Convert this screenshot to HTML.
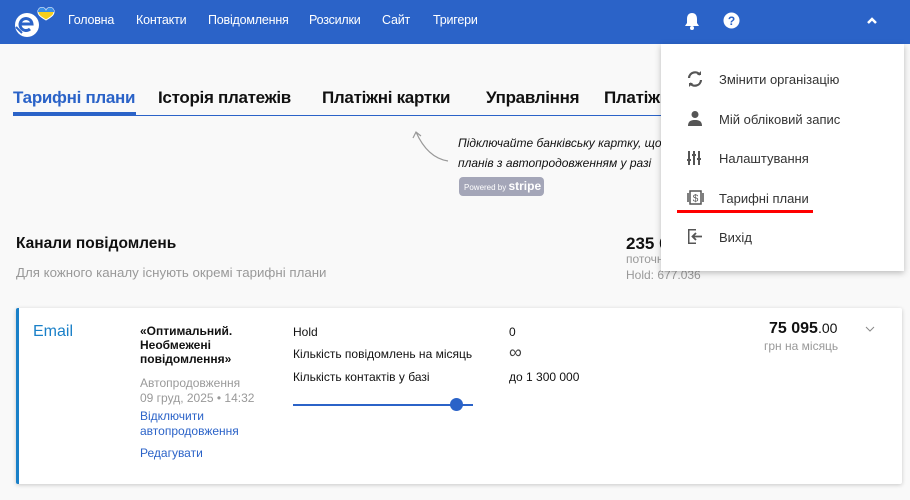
<!DOCTYPE html>
<html><head><meta charset="utf-8"><style>
*{margin:0;padding:0;box-sizing:border-box}
body{width:910px;height:500px;overflow:hidden;background:#f9f9f9;font-family:"Liberation Sans",sans-serif;position:relative;color:#111}
.hdr{position:absolute;left:0;top:0;width:910px;height:44px;background:#2b63c8}
.nav{position:absolute;top:13px;color:#fff;font-size:12.5px;letter-spacing:-0.2px}
.a{position:absolute;white-space:nowrap}
.tab{position:absolute;top:88px;font-size:17px;letter-spacing:-0.3px;font-weight:bold;color:#111;white-space:nowrap}
.menu{position:absolute;left:661px;top:44px;width:243px;height:227px;background:#fff;box-shadow:0 2px 6px rgba(0,0,0,.25)}
.mi{position:absolute;left:58px;font-size:13px;color:#333}
.ic{position:absolute;left:26px}
.card{position:absolute;left:16px;top:308px;width:886px;height:176px;background:#fff;border-left:3px solid #1a80c8;box-shadow:0 1px 4px rgba(0,0,0,.2);border-radius:2px}
.s{font-size:12px}
</style></head><body>
<div class="hdr"></div>
<svg class="a" style="left:12px;top:5px" width="44" height="34" viewBox="0 0 44 34">
<circle cx="15" cy="20" r="12" fill="#fff"/>
<path d="M9 19h11a6 6 0 1 0-2 5" stroke="#2b63c8" stroke-width="3" fill="none"/>
<path d="M4 22l6 6" stroke="#2b63c8" stroke-width="2"/>
<path d="M34 15c-5-3-8-5-8-8a3 3 0 0 1 8-1a3 3 0 0 1 8 1c0 3-3 5-8 8z" fill="#f6cf1d" stroke="#fff" stroke-width="1"/>
<path d="M26 7a3 3 0 0 1 8-1a3 3 0 0 1 8 1z" fill="#3a8ee6"/>
</svg>
<div class="nav" style="left:68px">Головна</div>
<div class="nav" style="left:136px">Контакти</div>
<div class="nav" style="left:208px">Повідомлення</div>
<div class="nav" style="left:309px">Розсилки</div>
<div class="nav" style="left:382px">Сайт</div>
<div class="nav" style="left:433px">Тригери</div>
<svg class="a" style="left:684px;top:12px" width="16" height="18" viewBox="0 0 16 18"><path d="M8 1c3 0 5 2 5 6v4l2 3H1l2-3V7c0-4 2-6 5-6z" fill="#fff"/><circle cx="8" cy="16" r="2" fill="#fff"/></svg>
<svg class="a" style="left:723px;top:12px" width="17" height="17" viewBox="0 0 17 17"><circle cx="8.5" cy="8.5" r="8" fill="#fff"/><text x="8.5" y="13" text-anchor="middle" font-size="12" font-weight="bold" fill="#2b63c8" font-family="Liberation Sans">?</text></svg>
<svg class="a" style="left:866px;top:16px" width="12" height="9" viewBox="0 0 12 9"><path d="M2 7l4-4 4 4" stroke="#fff" stroke-width="2.5" fill="none"/></svg>

<div class="tab" style="left:13px;color:#2b63c8">Тарифні плани</div>
<div class="tab" style="left:158px">Історія платежів</div>
<div class="tab" style="left:322px">Платіжні картки</div>
<div class="tab" style="left:486px">Управління</div>
<div class="tab" style="left:604px">Платіжні</div>
<div class="a" style="left:13px;top:115px;width:650px;height:1px;background:#2b63c8"></div>
<div class="a" style="left:13px;top:112px;width:123px;height:3px;background:#2b63c8"></div>

<svg class="a" style="left:410px;top:128px" width="40" height="36" viewBox="0 0 40 36"><path d="M38 33C25 31 14 22 6 4M3 10l3-6 5 4" stroke="#999" stroke-width="1.2" fill="none"/></svg>
<div class="a" style="left:458px;top:133px;font-size:12px;font-style:italic;line-height:20px">Підключайте банківську картку, щоб<br>планів з автопродовженням у разі</div>
<div class="a" style="left:459px;top:177px;width:85px;height:19px;background:#a4a6b8;border-radius:4px;color:#fff;font-size:8px;line-height:19px;padding-left:5px">Powered by <b style="font-size:12px">stripe</b></div>

<div class="a" style="left:16px;top:235px;font-size:15.5px;font-weight:bold">Канали повідомлень</div>
<div class="a" style="left:16px;top:265px;font-size:13.3px;color:#999">Для кожного каналу існують окремі тарифні плани</div>
<div class="a" style="left:626px;top:234px;font-size:17px;font-weight:bold">235 0</div>
<div class="a" style="left:626px;top:252px;font-size:12px;color:#999">поточн</div>
<div class="a" style="left:626px;top:268px;font-size:12px;color:#999">Hold: 677.036</div>

<div class="card">
<div class="a" style="left:14px;top:15px;font-size:16px;color:#1a80c8">Email</div>
<div class="a" style="left:121px;top:16px;font-size:12px;font-weight:bold;line-height:14px">«Оптимальний.<br>Необмежені<br>повідомлення»</div>
<div class="a s" style="left:121px;top:68px;color:#999;line-height:15px">Автопродовження<br>09 груд, 2025 • 14:32</div>
<div class="a s" style="left:121px;top:101px;color:#2b63c8;line-height:15px">Відключити<br>автопродовження</div>
<div class="a s" style="left:121px;top:138px;color:#2b63c8">Редагувати</div>
<div class="a s" style="left:274px;top:17px">Hold</div>
<div class="a s" style="left:274px;top:39px">Кількість повідомлень на місяць</div>
<div class="a s" style="left:274px;top:62px">Кількість контактів у базі</div>
<div class="a s" style="left:490px;top:17px">0</div>
<div class="a" style="left:490px;top:34px;font-size:18px;color:#444">∞</div>
<div class="a s" style="left:490px;top:62px">до 1 300 000</div>
<div class="a" style="left:274px;top:96px;width:180px;height:2px;background:#2b63c8"></div>
<div class="a" style="left:431px;top:90px;width:13px;height:13px;border-radius:50%;background:#2b63c8"></div>
<div class="a" style="left:750px;top:12px;font-size:16px;font-weight:bold">75 095<span style="font-weight:normal;font-size:14px">.00</span></div>
<div class="a s" style="left:745px;top:31px;color:#999">грн на місяць</div>
<svg class="a" style="left:846px;top:18px" width="10" height="7" viewBox="0 0 10 7"><path d="M1 1l4 4 4-4" stroke="#888" fill="none"/></svg>
</div>

<div class="menu">
<svg class="ic" style="top:27px" width="16" height="16" viewBox="0 0 16 16"><path d="M2 7a6 6 0 0 1 11-3M14 9a6 6 0 0 1-11 3" stroke="#555" stroke-width="2.2" fill="none"/><path d="M10 4h4V0zM6 12H2v4z" fill="#555"/></svg>
<div class="mi" style="top:28px">Змінити організацію</div>
<svg class="ic" style="top:66px" width="16" height="16" viewBox="0 0 16 16"><circle cx="8" cy="4.5" r="3.5" fill="#555"/><path d="M1 16c0-5 3-6 7-6s7 1 7 6z" fill="#555"/></svg>
<div class="mi" style="top:68px">Мій обліковий запис</div>
<svg class="ic" style="top:107px" width="14" height="14" viewBox="0 0 14 14"><path d="M2 0v14M7 0v14M12 0v14" stroke="#555" stroke-width="2"/><path d="M0 9h4M5 4h4M10 8h4" stroke="#555" stroke-width="2"/></svg>
<div class="mi" style="top:107px">Налаштування</div>
<svg class="ic" style="top:146px" width="17" height="15" viewBox="0 0 17 15"><rect x="3" y="1" width="11" height="13" fill="none" stroke="#555" stroke-width="1.5"/><path d="M1 3v9M16 3v9" stroke="#555" stroke-width="1.5"/><text x="8.5" y="11.5" text-anchor="middle" font-size="10" fill="#555" font-family="Liberation Sans">$</text></svg>
<div class="mi" style="top:147px">Тарифні плани</div>
<div class="a" style="left:16px;top:166px;width:136px;height:3px;background:#f00"></div>
<svg class="ic" style="top:185px" width="16" height="15" viewBox="0 0 16 15"><path d="M1 0v15h8v-1.5H2.5v-12H9V0z" fill="#555"/><path d="M15 7.5H6M9 4L5.5 7.5 9 11" stroke="#555" stroke-width="1.8" fill="none"/></svg>
<div class="mi" style="top:186px">Вихід</div>
</div>
</body></html>
